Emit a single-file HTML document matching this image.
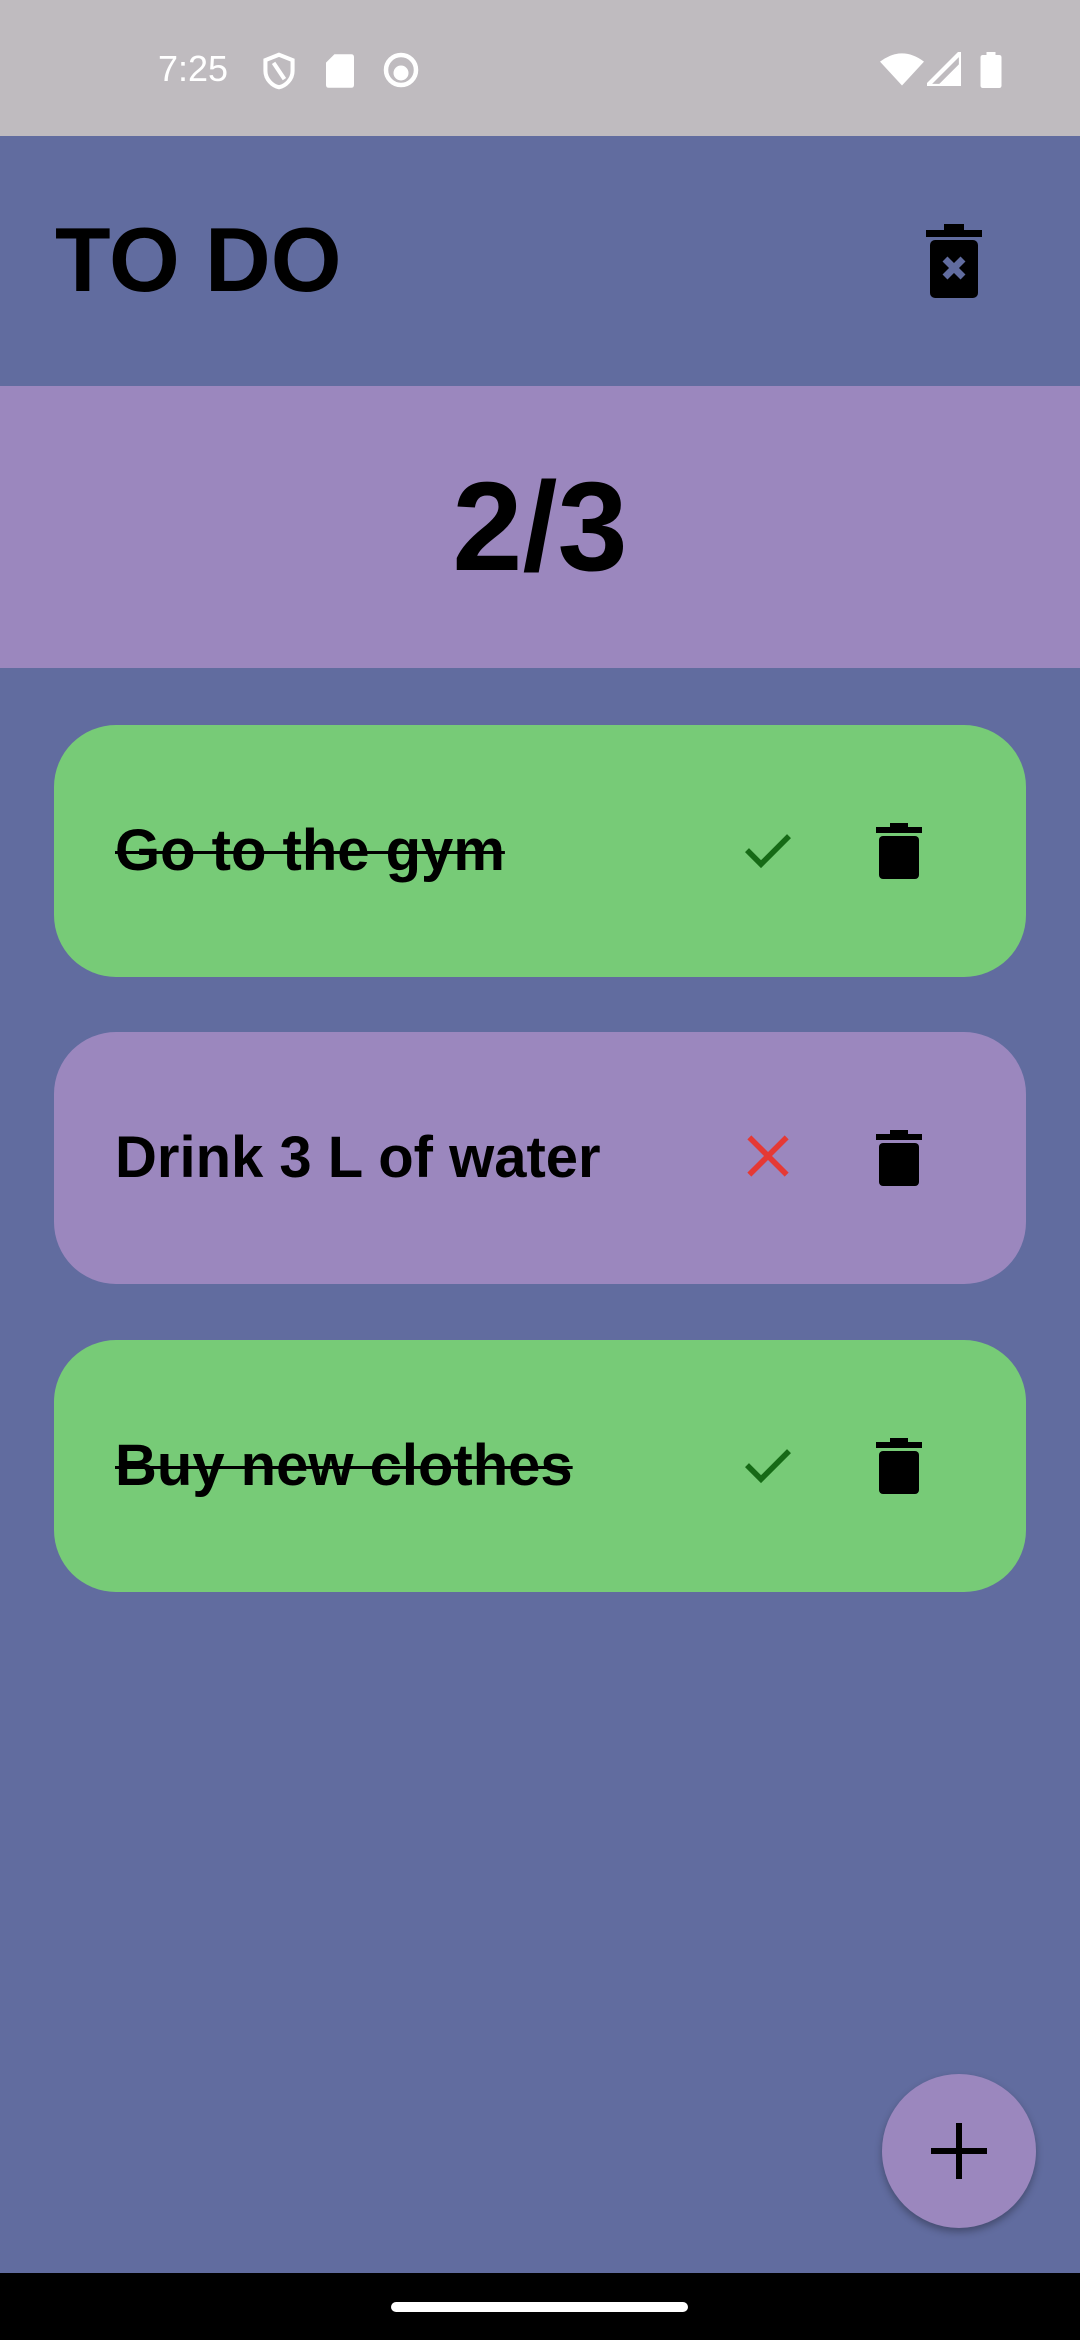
<!DOCTYPE html>
<html><head><meta charset="utf-8"><style>
*{margin:0;padding:0;box-sizing:border-box}
body{width:1080px;height:2340px;background:#616c9f;font-family:"Liberation Sans",sans-serif;position:relative;overflow:hidden}
.sb{position:absolute;left:0;top:0;width:1080px;height:136px;background:#bfbbbf;color:#fff}
.hdr{position:absolute;left:0;top:136px;width:1080px;height:250px;background:#616c9f}
.cnt{position:absolute;left:0;top:386px;width:1080px;height:282px;background:#9b87be;text-align:center;font-weight:bold;font-size:126px;line-height:282px}
.card{position:absolute;left:54px;width:972px;height:252px;border-radius:62px}
.card .t{position:absolute;left:61px;top:0;line-height:252px;font-weight:bold;font-size:58px;color:#000}
.s{text-decoration:line-through;text-decoration-thickness:3px}
.g{background:#77cb77}.p{background:#9b87be}
.ic{position:absolute;top:96px}
.nav{position:absolute;left:0;top:2273px;width:1080px;height:67px;background:#000}
</style></head><body>
<div class="sb">
<div style="position:absolute;left:158px;top:48px;font-size:36px">7:25</div>
<svg style="position:absolute;left:262px;top:52px" width="34" height="38" viewBox="0 0 24 28"><path d="M12 2 L22 6 V14 C22 20 17 25 12 26 C7 25 2 20 2 14 V6Z" fill="none" stroke="#fff" stroke-width="3"/><path d="M8 8 L16 20" stroke="#fff" stroke-width="3"/></svg>
<svg style="position:absolute;left:326px;top:54px" width="28" height="34" viewBox="0 0 20 24"><path d="M6 0H18Q20 0 20 2V22Q20 24 18 24H2Q0 24 0 22V6Z" fill="#fff"/></svg>
<svg style="position:absolute;left:383px;top:52px" width="36" height="36" viewBox="0 0 24 24"><circle cx="12" cy="12" r="10" fill="none" stroke="#fff" stroke-width="3"/><circle cx="12" cy="14" r="5" fill="#fff"/></svg>
<svg style="position:absolute;left:880px;top:52px" width="44" height="34" viewBox="0 0 24 18"><path d="M0 5 Q12 -4 24 5 L12 18Z" fill="#fff"/></svg>
<svg style="position:absolute;left:927px;top:52px" width="34" height="34" viewBox="0 0 20 20"><path d="M20 0V20H0Z" fill="none" stroke="#fff" stroke-width="2.5"/><path d="M20 6V20H6Z" fill="#fff"/></svg>
<svg style="position:absolute;left:980px;top:52px" width="22" height="36" viewBox="0 0 14 24"><rect x="4" y="0" width="6" height="3" fill="#fff"/><rect x="0" y="2" width="14" height="22" rx="1.5" fill="#fff"/></svg>
</div>
<div class="hdr">
<div style="position:absolute;left:55px;top:65px;font-size:91px;font-weight:bold;line-height:120px;color:#000">TO DO</div>
<svg style="position:absolute;left:926px;top:88px" width="56" height="74" viewBox="0 0 56 74"><rect x="18" y="0" width="20" height="6" fill="#000"/><rect x="0" y="6" width="56" height="7" fill="#000"/><rect x="4" y="16" width="48" height="58" rx="5" fill="#000"/><path d="M19 35 L37 53 M37 35 L19 53" stroke="#616c9f" stroke-width="7"/></svg>
</div>
<div class="cnt">2/3</div>

<div class="card g" style="top:725px"><div class="t s">Go to the gym</div>
<svg class="ic" style="left:686px" width="56" height="56" viewBox="0 0 24 24"><path d="M3 12.5 L9 18.5 L21 6.5" fill="none" stroke="#166a16" stroke-width="2.4"/></svg>
<svg class="ic" style="left:822px;top:98px" width="46" height="56" viewBox="0 0 46 56"><rect x="14" y="0" width="18" height="5" fill="#000"/><rect x="0" y="4" width="46" height="6" fill="#000"/><rect x="3" y="13" width="40" height="43" rx="4" fill="#000"/></svg></div>

<div class="card p" style="top:1032px"><div class="t">Drink 3 L of water</div>
<svg class="ic" style="left:686px" width="56" height="56" viewBox="0 0 24 24"><path d="M4 4 L20 20 M20 4 L4 20" fill="none" stroke="#e53935" stroke-width="2.4"/></svg>
<svg class="ic" style="left:822px;top:98px" width="46" height="56" viewBox="0 0 46 56"><rect x="14" y="0" width="18" height="5" fill="#000"/><rect x="0" y="4" width="46" height="6" fill="#000"/><rect x="3" y="13" width="40" height="43" rx="4" fill="#000"/></svg></div>

<div class="card g" style="top:1340px"><div class="t s">Buy new clothes</div>
<svg class="ic" style="left:686px" width="56" height="56" viewBox="0 0 24 24"><path d="M3 12.5 L9 18.5 L21 6.5" fill="none" stroke="#166a16" stroke-width="2.4"/></svg>
<svg class="ic" style="left:822px;top:98px" width="46" height="56" viewBox="0 0 46 56"><rect x="14" y="0" width="18" height="5" fill="#000"/><rect x="0" y="4" width="46" height="6" fill="#000"/><rect x="3" y="13" width="40" height="43" rx="4" fill="#000"/></svg></div>

<div style="position:absolute;left:882px;top:2074px;width:154px;height:154px;border-radius:50%;background:#9b87be;box-shadow:0 4px 8px rgba(0,0,0,.3)">
<svg style="position:absolute;left:47px;top:47px" width="60" height="60" viewBox="0 0 60 60"><path d="M30 2V58M2 30H58" stroke="#000" stroke-width="6"/></svg></div>
<div class="nav"><div style="position:absolute;left:391px;top:29px;width:297px;height:10px;border-radius:5px;background:#fff"></div></div>
</body></html>
